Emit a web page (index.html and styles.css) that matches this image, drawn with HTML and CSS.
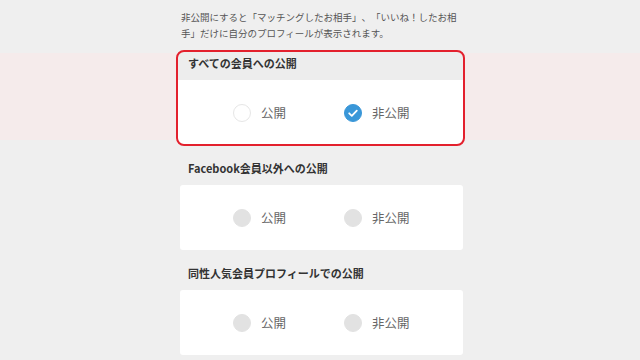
FILE: index.html
```html
<!DOCTYPE html>
<html lang="ja">
<head>
<meta charset="utf-8">
<link rel="stylesheet" href="styles.css">
</head>
<body>
<div class="band"></div>
<main class="page">
  <p class="note">非公開にすると「マッチングしたお相手」、「いいね！したお相<br>手」だけに自分のプロフィールが表示されます。</p>

  <section class="group highlighted">
    <h2 class="group-title">すべての会員への公開</h2>
    <div class="card">
      <label class="option"><span class="radio"></span><span class="label">公開</span></label>
      <label class="option"><span class="radio checked"><svg viewBox="0 0 18 18" width="18" height="18"><path d="M5.2 9.3 L7.8 11.8 L12.8 6.6" fill="none" stroke="#fff" stroke-width="1.8" stroke-linecap="round" stroke-linejoin="round"/></svg></span><span class="label">非公開</span></label>
    </div>
  </section>

  <section class="group">
    <h2 class="group-title">Facebook会員以外への公開</h2>
    <div class="card">
      <label class="option"><span class="radio disabled"></span><span class="label">公開</span></label>
      <label class="option"><span class="radio disabled"></span><span class="label">非公開</span></label>
    </div>
  </section>

  <section class="group">
    <h2 class="group-title">同性人気会員プロフィールでの公開</h2>
    <div class="card">
      <label class="option"><span class="radio disabled"></span><span class="label">公開</span></label>
      <label class="option"><span class="radio disabled"></span><span class="label">非公開</span></label>
    </div>
  </section>
</main>
</body>
</html>
```

FILE: styles.css
```css
html, body {
  margin: 0;
  padding: 0;
}
body {
  background: #efefef;
  font-family: "Noto Sans CJK JP", "Noto Sans", sans-serif;
  width: 640px;
  height: 360px;
  overflow: hidden;
  position: relative;
  text-spacing-trim: space-all;
}
.band {
  position: absolute;
  left: 0;
  right: 0;
  top: 53px;
  height: 87px;
  background: #f5ebeb;
  z-index: 0;
}
.page {
  position: relative;
  z-index: 1;
  width: 283px;
  margin-left: 180px;
  padding-top: 9px;
}
.note {
  margin: 0 0 11px 1px;
  font-size: 9.5px;
  line-height: 16px;
  color: #555;
  white-space: nowrap;
  text-spacing-trim: space-all;
}
.group {
  position: relative;
  margin-bottom: 12px;
}
.highlighted::after {
  content: "";
  position: absolute;
  top: -2px;
  left: -4px;
  right: -2px;
  bottom: -1px;
  border: 2px solid #e3202d;
  border-radius: 8px;
  pointer-events: none;
}
.highlighted .group-title {
  background: #ededed;
  margin-left: -2px;
  padding-left: 10px;
  border-radius: 6px 6px 0 0;
}
.highlighted .card {
  margin-left: -2px;
  padding-left: 55px;
  border-radius: 0 0 6px 6px;
}
.group-title {
  margin: 0;
  height: 28px;
  box-sizing: border-box;
  padding: 4px 0 0 8px;
  font-size: 11px;
  line-height: 14px;
  font-weight: 700;
  color: #333;
}
.card {
  background: #fff;
  border-radius: 3px;
  height: 65px;
  display: grid;
  grid-template-columns: 111px 111px;
  align-items: center;
  padding-left: 53px;
}
.option {
  display: flex;
  align-items: center;
  gap: 10px;
}
.radio {
  width: 18px;
  height: 18px;
  border-radius: 50%;
  box-sizing: border-box;
  border: 1px solid #e6e6e6;
  background: #fff;
  display: block;
  flex: none;
}
.radio.checked {
  background: #3a97d8;
  border-color: #3a97d8;
}
.radio.checked svg {
  display: block;
  margin: -1px;
}
.radio.disabled {
  background: #e2e2e2;
  border-color: #e2e2e2;
}
.label {
  font-size: 12.5px;
  line-height: 16px;
  color: #666;
}
```
